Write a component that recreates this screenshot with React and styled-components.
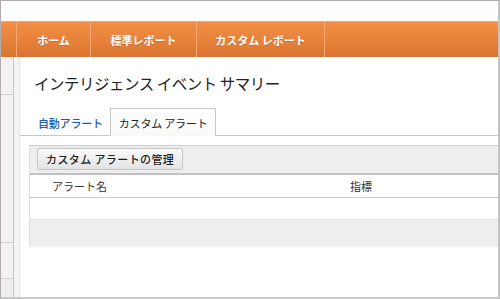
import React from 'react'
import styled, { createGlobalStyle } from "styled-components";

const navItems = [
  { id: 0, label: "ホーム", width: 74 },
  { id: 1, label: "標準レポート", width: 106 },
  { id: 2, label: "カスタム レポート", width: 129 },
];

const sideRows = [37, 147, 35];

export default function App() {
  return (
    <>
      <GlobalStyle />
      <Frame>
        <TopStrip />
        <NavBar>
          <NavStart />
          {navItems.map((item) => (
            <NavItem key={item.id} $width={item.width}>{item.label}</NavItem>
          ))}
        </NavBar>
        <Body>
          <Sidebar>
            {sideRows.map((h, i) => (
              <SideRow key={i} $height={h} />
            ))}
          </Sidebar>
          <SideStrip />
          <Main>
            <Title>インテリジェンス イベント サマリー</Title>
            <Tabs>
              <Tab>自動アラート</Tab>
              <Tab $active>カスタム アラート</Tab>
            </Tabs>
            <Panel>
              <Toolbar>
                <Button>カスタム アラートの管理</Button>
              </Toolbar>
              <HeaderRow>
                <Cell>アラート名</Cell>
                <Cell $center>指標</Cell>
                <Cell />
              </HeaderRow>
              <EmptyRow />
              <GrayRow />
            </Panel>
          </Main>
        </Body>
      </Frame>
    </>
  )
}

const GlobalStyle = createGlobalStyle`
  body {
    margin: 0;
    background: #fff;
    font-family: "Noto Sans CJK JP", "Noto Sans", sans-serif;
  }
`;

const Frame = styled.div`
  width: 500px;
  height: 299px;
  box-sizing: border-box;
  border: 1px solid #b2acaf;
  border-right: 2px solid #c4c4c4;
  border-bottom: 2px solid #c8c8c8;
  display: flex;
  flex-direction: column;
  overflow: hidden;
  background: #fff;
`;

const TopStrip = styled.div`
  height: 20px;
`;

const NavBar = styled.div`
  height: 36px;
  display: flex;
  background: linear-gradient(#f48f45, #d97531);
  border-top: 1px solid #f6a468;
  box-sizing: border-box;
`;

const NavStart = styled.div`
  width: 15px;
`;

const NavItem = styled.div`
  width: ${(p) => p.$width}px;
  box-sizing: border-box;
  border-left: 1px solid #f5a873;
  &:last-child { border-right: 1px solid #f5a873; }
  display: flex;
  align-items: center;
  justify-content: center;
  color: #fff;
  font-size: 11px;
  font-weight: 700;
  text-shadow: 0 1px 0 rgba(120, 50, 0, 0.25);
`;

const Body = styled.div`
  flex: 1;
  display: flex;
`;

const Sidebar = styled.div`
  width: 12px;
  background: #efefef;
  border-right: 1px solid #c6c6c6;
  display: flex;
  flex-direction: column;
`;

const SideRow = styled.div`
  height: ${(p) => p.$height}px;
  border-bottom: 1px solid #cfcfcf;
  background: #f2f2f2;
`;

const SideStrip = styled.div`
  width: 5px;
  background: #f4f4f4;
  border-right: 1px solid #e2e2e2;
`;

const Main = styled.div`
  flex: 1;
  display: flex;
  flex-direction: column;
`;

const Title = styled.h1`
  margin: 16px 0 0 14px;
  font-size: 15.5px;
  line-height: 20px;
  font-weight: 400;
  color: #222;
  letter-spacing: -0.5px;
`;

const Tabs = styled.div`
  margin-top: 15px;
  padding-left: 9px;
  display: flex;
  align-items: flex-end;
  gap: 1px;
  border-bottom: 1px solid #c8c8c8;
  height: 27px;
`;

const Tab = styled.div`
  box-sizing: border-box;
  height: ${(p) => (p.$active ? "28px" : "26px")};
  padding: ${(p) => (p.$active ? "0 8px" : "0 5px 0 8px")};
  display: flex;
  align-items: center;
  font-size: 11px;
  font-weight: ${(p) => (p.$active ? 400 : 500)};
  letter-spacing: -0.2px;
  color: ${(p) => (p.$active ? "#222" : "#1b5da6")};
  margin-bottom: ${(p) => (p.$active ? "-1px" : "0")};
  border: ${(p) => (p.$active ? "1px solid #c8c8c8" : "1px solid transparent")};
  border-bottom: none;
  background: ${(p) => (p.$active ? "linear-gradient(#fff, #f9f9f9)" : "transparent")};
`;

const Panel = styled.div`
  margin: 9px 0 0 9px;
  border-top: 1px solid #cfcfcf;
  border-left: 1px solid #dedede;
  display: flex;
  flex-direction: column;
`;

const Toolbar = styled.div`
  box-sizing: border-box;
  padding: 2px 7px;
  background: #eeeeee;
  border-bottom: 2px solid #c2c2c2;
  display: flex;
  align-items: flex-start;
  height: 29px;
`;

const Button = styled.div`
  height: 22px;
  box-sizing: border-box;
  padding: 0 8px;
  border: 1px solid #c6c6c6;
  border-radius: 2px;
  background: linear-gradient(#fbfbfb, #e3e3e3);
  display: flex;
  align-items: center;
  font-size: 11px;
  font-weight: 500;
  letter-spacing: 0.4px;
  color: #222;
`;

const HeaderRow = styled.div`
  height: 23px;
  box-sizing: border-box;
  border-bottom: 1px solid #cccccc;
  display: grid;
  grid-template-columns: 271px 120px 1fr;
  align-items: center;
`;

const Cell = styled.div`
  font-size: 11px;
  color: #333;
  padding-left: ${(p) => (p.$center ? "0" : "22px")};
  text-align: ${(p) => (p.$center ? "center" : "left")};
`;

const EmptyRow = styled.div`
  height: 22px;
  box-sizing: border-box;
  border-bottom: 1px solid #e0e0e0;
`;

const GrayRow = styled.div`
  height: 27px;
  background: #eeeeee;
`;
